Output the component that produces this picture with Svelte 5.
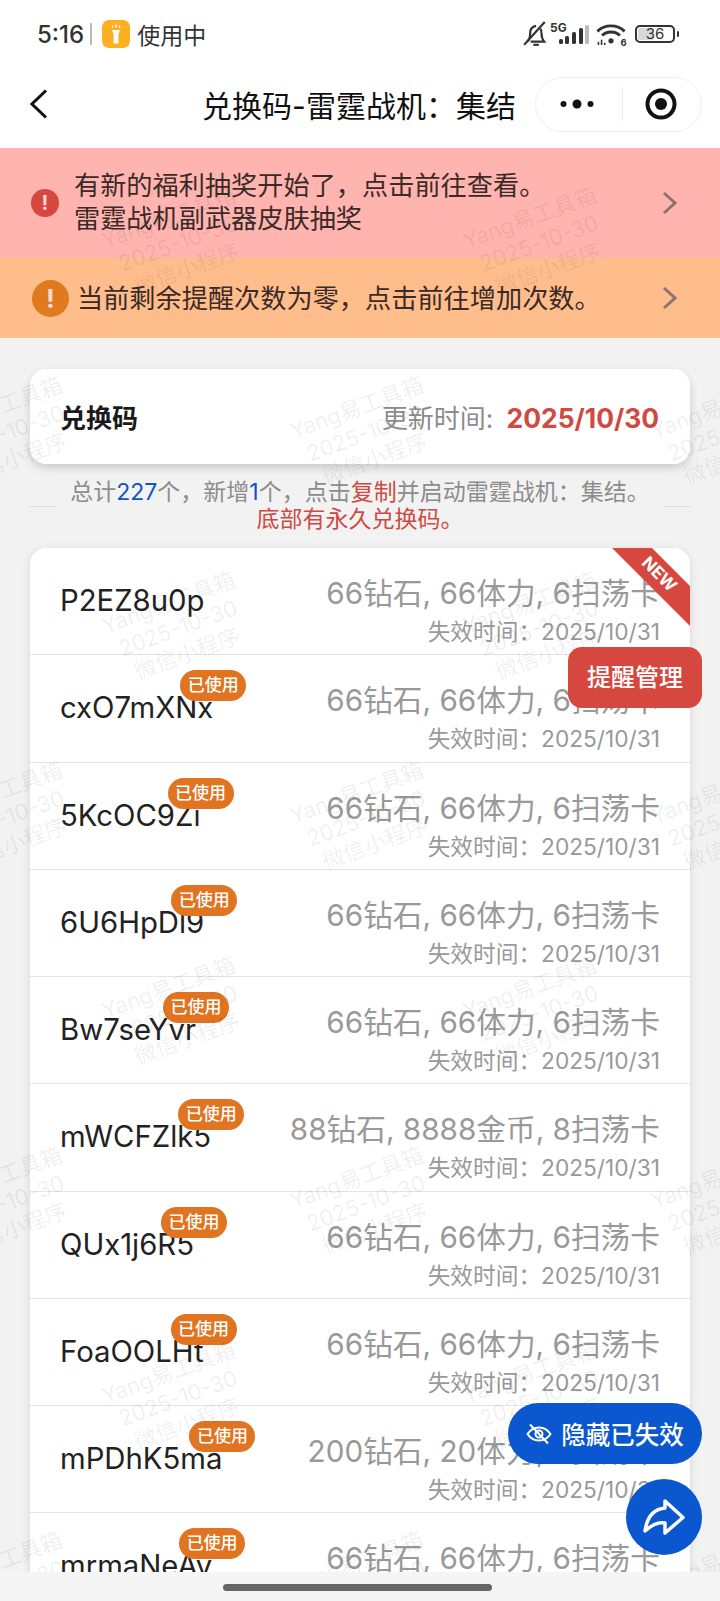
<script>
	const rows = [
		{ code: 'P2EZ8u0p', reward: '66钻石, 66体力, 6扫荡卡', used: false },
		{ code: 'cxO7mXNx', reward: '66钻石, 66体力, 6扫荡卡', used: true },
		{ code: '5KcOC9Zi', reward: '66钻石, 66体力, 6扫荡卡', used: true },
		{ code: '6U6HpDl9', reward: '66钻石, 66体力, 6扫荡卡', used: true },
		{ code: 'Bw7seYvr', reward: '66钻石, 66体力, 6扫荡卡', used: true },
		{ code: 'mWCFZlk5', reward: '88钻石, 8888金币, 8扫荡卡', used: true },
		{ code: 'QUx1j6R5', reward: '66钻石, 66体力, 6扫荡卡', used: true },
		{ code: 'FoaOOLHt', reward: '66钻石, 66体力, 6扫荡卡', used: true },
		{ code: 'mPDhK5ma', reward: '200钻石, 20体力, 8扫荡卡', used: true },
		{ code: 'mrmaNeAv', reward: '66钻石, 66体力, 6扫荡卡', used: true }
	];

	// watermark tiles, staggered: two columns repeating every 385px
	const marks = [];
	for (let i = 0; i < 4; i++) {
		for (const x of [178, 539]) marks.push({ x, y: 95 + i * 385 });
		for (const x of [5, 366, 727]) marks.push({ x, y: 285 + i * 385 });
	}
</script>

<div class="phone">
	<div class="status">
		<div class="status-left">
			<span class="clock">5:16</span>
			<span class="status-sep"></span>
			<span class="flash">
				<svg viewBox="0 0 28 28" width="28" height="28">
					<path d="M10 10h8l-1.600 4v9.500h-4.800V14z" fill="#fff" />
					<path d="M14 4.500v3M10 5.500l1 2M18 5.500l-1 2" stroke="#fff" stroke-width="1.300" fill="none" />
				</svg>
			</span>
			<span class="inuse">使用中</span>
		</div>
		<div class="status-right">
			<svg class="bell" viewBox="0 0 24 24" width="26" height="26">
				<path d="M5 19c2-2 2.500-4 2.500-7.500C7.500 7.500 10 5 13 4.500 M17 7c.8 1.200 1 2.800 1 4.500 0 3.500.8 5.500 2.500 7.500H8" fill="none" stroke="#333" stroke-width="2" />
				<path d="M2 22L21 1" stroke="#333" stroke-width="2" />
				<path d="M10.500 22h5" stroke="#333" stroke-width="2" />
			</svg>
			<span class="net">
				<span class="fiveg">5G</span>
				<svg viewBox="0 0 30 20" width="30" height="20">
					<rect x="0" y="14" width="4" height="5" rx="1.500" fill="#333" />
					<rect x="6" y="11" width="4" height="8" rx="1.500" fill="#333" />
					<rect x="13" y="7" width="4" height="12" rx="1.500" fill="#333" />
					<rect x="20" y="3" width="4" height="16" rx="1.500" fill="#333" />
					<rect x="26" y="0" width="4" height="19" rx="1.500" fill="#bbb" />
				</svg>
			</span>
			<svg class="wifi" viewBox="0 0 30 22" width="32" height="23">
				<path d="M2 8c7-7 19-7 26 0" fill="none" stroke="#333" stroke-width="2.800" />
				<path d="M6.500 12c4.500-4.500 12.500-4.500 17 0" fill="none" stroke="#333" stroke-width="2.800" />
				<circle cx="15" cy="17" r="2.500" fill="#333" />
				<path d="M3 21v-3M6 21v-5M9 21v-2" stroke="#333" stroke-width="1.500" />
				<text x="24" y="22" class="wifi-six">6</text>
			</svg>
			<span class="battery">
				<span class="battery-body">
					<span class="battery-fill"></span>
					<span class="battery-num">36</span>
				</span>
				<span class="battery-nub"></span>
			</span>
		</div>
	</div>

	<div class="nav">
		<svg class="back" viewBox="0 0 18 30" width="18" height="30">
			<path d="M16 1.500L2 15l14 13.500" fill="none" stroke="#111" stroke-width="3" />
		</svg>
		<div class="title">兑换码-雷霆战机：集结</div>
		<div class="capsule">
			<svg viewBox="0 0 34 12" width="34" height="12">
				<circle cx="3.500" cy="6" r="3" fill="#111" />
				<circle cx="17" cy="6" r="4.500" fill="#111" />
				<circle cx="30.500" cy="6" r="3" fill="#111" />
			</svg>
			<span class="capsule-sep"></span>
			<svg viewBox="0 0 32 32" width="32" height="32">
				<circle cx="16" cy="16" r="13.500" fill="none" stroke="#111" stroke-width="4" />
				<circle cx="16" cy="16" r="6" fill="#111" />
			</svg>
		</div>
	</div>

	<div class="body">
		<div class="banner red">
			<span class="dot dot-red">!</span>
			<div class="banner-text">有新的福利抽奖开始了，点击前往查看。<br />雷霆战机副武器皮肤抽奖</div>
			<svg class="chev" viewBox="0 0 16 24" width="16" height="24">
				<path d="M2 2l11 10L2 22" fill="none" stroke="#8c7370" stroke-width="3" />
			</svg>
		</div>
		<div class="banner orange">
			<span class="dot dot-orange">!</span>
			<div class="banner-text">当前剩余提醒次数为零，点击前往增加次数。</div>
			<svg class="chev" viewBox="0 0 16 24" width="16" height="24">
				<path d="M2 2l11 10L2 22" fill="none" stroke="#8c7370" stroke-width="3" />
			</svg>
		</div>

		<div class="main">
			<div class="head-card">
				<span class="head-title">兑换码</span>
				<span class="head-time">更新时间: <b>2025/10/30</b></span>
			</div>

			<div class="note">
				<span class="rule"></span>
				<div class="note-text">
					总计<i>227</i>个，新增<i>1</i>个，点击<em>复制</em>并启动雷霆战机：集结。<br />
					<em>底部有永久兑换码。</em>
				</div>
				<span class="rule"></span>
			</div>

			<div class="list">
				<div class="ribbon"></div>
				<span class="ribbon-text">NEW</span>
				{#each rows as row}
					<div class="row">
						<div class="code">
							{row.code}
							{#if row.used}<span class="badge">已使用</span>{/if}
						</div>
						<div class="info">
							<div class="reward">{row.reward}</div>
							<div class="expire">失效时间：2025/10/31</div>
						</div>
					</div>
				{/each}
			</div>
		</div>

		<div class="marks">
			{#each marks as m}
				<div class="mark" style="left:{m.x}px;top:{m.y}px">Yang易工具箱<br />2025-10-30<br />微信小程序</div>
			{/each}
		</div>

		<div class="fab-remind">提醒管理</div>
		<div class="fab-hide">
			<svg viewBox="0 0 26 24" width="26" height="24">
				<path d="M1.500 12C4.500 7.500 8.500 5.500 13 5.500s8.500 2 11.500 6.500c-3 4.500-7 6.500-11.500 6.500S4.500 16.500 1.500 12z" fill="none" stroke="#fff" stroke-width="2" />
				<circle cx="13" cy="12" r="3.500" fill="none" stroke="#fff" stroke-width="2" />
				<path d="M4 2.500L22 21.500" stroke="#fff" stroke-width="2" />
			</svg>
			隐藏已失效
		</div>
		<div class="fab-share">
			<svg viewBox="0 0 76 76" width="76" height="76">
				<path d="M39 22l18 16.500L39 54V44c-9-1-14 3-20 8 2-14 9-22 20-23z" fill="none" stroke="#fff" stroke-width="3.500" stroke-linejoin="round" />
			</svg>
		</div>
	</div>

	<div class="home"><span class="home-bar"></span></div>
</div>

<style>
	:global(body) {
		margin: 0;
		background: #f2f2f2;
	}

	.phone {
		width: 720px;
		height: 1601px;
		display: flex;
		flex-direction: column;
		overflow: hidden;
		background: #fff;
		font-family: Inter, "Noto Sans CJK SC", sans-serif;
		color: #222;
	}

	.status {
		height: 68px;
		padding: 0 41px 2px 37px;
		display: flex;
		justify-content: space-between;
		align-items: center;
		flex: none;
	}

	.status-left,
	.status-right {
		display: flex;
		align-items: center;
	}

	.clock {
		font-size: 24px;
		font-weight: 500;
		color: #333;
	}

	.status-sep {
		width: 2px;
		height: 22px;
		background: #bbb;
		margin: 0 10px 0 6px;
	}

	.flash {
		width: 28px;
		height: 28px;
		border-radius: 7px;
		background: #fdb022;
		display: flex;
	}

	.inuse {
		margin-left: 7px;
		font-size: 23px;
		color: #333;
	}

	.bell {
		margin-right: 1px;
	}

	.net {
		position: relative;
		width: 40px;
		height: 22px;
		display: flex;
		align-items: flex-end;
		justify-content: flex-end;
	}

	.net svg {
		width: 30px;
	}

	.fiveg {
		position: absolute;
		left: 1px;
		top: -3px;
		font-size: 12px;
		font-weight: 700;
		color: #333;
	}

	.wifi {
		margin-left: 6px;
	}

	.wifi-six {
		font-size: 9px;
		font-weight: 700;
		fill: #333;
	}

	.battery {
		margin-left: 8px;
		display: flex;
		align-items: center;
	}

	.battery-body {
		position: relative;
		width: 40px;
		height: 18px;
		box-sizing: border-box;
		border: 2px solid #333;
		border-radius: 5px;
		display: flex;
		align-items: center;
		justify-content: center;
	}

	.battery-fill {
		position: absolute;
		left: 1px;
		top: 1px;
		bottom: 1px;
		width: 16px;
		background: #d8d8d8;
		border-radius: 2px;
	}

	.battery-num {
		position: relative;
		font-size: 15px;
		line-height: 14px;
		color: #333;
	}

	.battery-nub {
		width: 2px;
		height: 6px;
		margin-left: 2px;
		background: #333;
		border-radius: 1px;
	}

	.nav {
		height: 78px;
		flex: none;
		display: grid;
		grid-template-columns: 1fr auto 1fr;
		align-items: center;
		padding: 0 18px 10px 30px;
		box-sizing: border-box;
	}

	.title {
		font-size: 30px;
		color: #111;
		white-space: nowrap;
		transform: translateX(-7px);
	}

	.capsule {
		justify-self: end;
		width: 167px;
		height: 55px;
		box-sizing: border-box;
		border: 1px solid #efefef;
		border-radius: 28px;
		display: flex;
		align-items: center;
		padding: 0 24px;
		justify-content: space-between;
	}

	.capsule-sep {
		width: 1px;
		height: 34px;
		background: #eee;
		margin-left: 6px;
	}

	.body {
		position: relative;
		flex: 1;
		overflow: hidden;
		background: #f2f2f2;
		display: flex;
		flex-direction: column;
	}

	.banner {
		flex: none;
		display: flex;
		align-items: center;
		color: #3a2a28;
		font-size: 26.200px;
		line-height: 33px;
	}

	.red {
		height: 110px;
		background: #ffb4af;
		padding: 0 42px 0 31px;
	}

	.orange {
		height: 80px;
		background: #ffbd8c;
		padding: 0 42px 0 32px;
	}

	.banner-text {
		flex: 1;
	}

	.red .banner-text {
		margin-left: 15px;
		margin-top: -2px;
	}

	.orange .banner-text {
		margin-left: 8px;
	}

	.dot {
		flex: none;
		border-radius: 50%;
		color: #ffd9d4;
		display: flex;
		align-items: center;
		justify-content: center;
		font-weight: 700;
	}

	.dot-red {
		width: 28px;
		height: 28px;
		background: #d6483f;
		font-size: 20px;
	}

	.dot-orange {
		width: 37px;
		height: 37px;
		background: #e07a1f;
		font-size: 26px;
	}

	.main {
		flex: 1;
		padding: 31px 30px 0;
		min-height: 0;
	}

	.head-card {
		height: 95px;
		box-sizing: border-box;
		padding: 0 31px 0 30px;
		background: #fff;
		border-radius: 16px;
		box-shadow: 0 4px 8px rgba(0, 0, 0, 0.16);
		display: flex;
		justify-content: space-between;
		align-items: center;
	}

	.head-title {
		font-size: 26px;
		font-weight: 700;
		color: #1a1a1a;
	}

	.head-time {
		font-size: 26px;
		color: #8c8c8c;
	}

	.head-time b {
		font-size: 26.400px;
		font-weight: 700;
		color: #cf4a42;
		margin-left: 6px;
	}

	.note {
		margin: 15px 0;
		display: flex;
		align-items: center;
	}

	.rule {
		flex: none;
		width: 27px;
		height: 1px;
		background: #dcdcdc;
	}

	.note-text {
		flex: 1;
		text-align: center;
		font-size: 23px;
		line-height: 27px;
		color: #8c8c8c;
		white-space: nowrap;
	}

	.note-text i {
		font-style: normal;
		color: #0d55c4;
	}

	.note-text em {
		font-style: normal;
		color: #cf4a42;
	}

	.list {
		position: relative;
		background: #fff;
		border-radius: 16px;
		box-shadow: 0 2px 8px rgba(0, 0, 0, 0.12);
	}

	.ribbon {
		position: absolute;
		top: 0;
		right: 0;
		width: 78px;
		height: 78px;
		background: #d6483f;
		clip-path: polygon(0 0, 40px 0, 100% 38px, 100% 100%);
	}

	.ribbon-text {
		position: absolute;
		top: 16px;
		right: 10px;
		font-size: 17px;
		line-height: 20px;
		font-weight: 700;
		color: #fff;
		transform: rotate(45deg);
	}

	.row {
		height: 107.250px;
		box-sizing: border-box;
		padding: 0 30px 0 30px;
		border-bottom: 1px solid #e4e4e4;
		display: flex;
		justify-content: space-between;
	}

	.code {
		position: relative;
		align-self: flex-start;
		margin-top: 33px;
		font-size: 29.300px;
		line-height: 40px;
		color: #222;
		white-space: nowrap;
	}

	.badge {
		position: absolute;
		top: -18px;
		right: -33px;
		width: 66px;
		height: 31px;
		border-radius: 16px;
		background: #e07420;
		color: #fff;
		font-size: 17px;
		font-weight: 500;
		line-height: 31px;
		text-align: center;
	}

	.info {
		padding-top: 26px;
		text-align: right;
		color: #999;
	}

	.reward {
		font-size: 29.700px;
		line-height: 38px;
		white-space: nowrap;
	}

	.expire {
		margin-top: 5px;
		font-size: 22.700px;
		line-height: 30px;
		white-space: nowrap;
	}

	.marks {
		position: absolute;
		inset: 0;
		pointer-events: none;
	}

	.mark {
		position: absolute;
		width: 200px;
		margin-left: -100px;
		margin-top: -40px;
		text-align: center;
		font-size: 22px;
		line-height: 27px;
		color: rgba(0, 0, 0, 0.07);
		transform: rotate(-20deg);
	}

	.fab-remind {
		position: absolute;
		left: 568px;
		top: 499px;
		width: 134px;
		height: 61px;
		border-radius: 14px;
		background: #d6483f;
		color: #fff;
		font-size: 24px;
		font-weight: 500;
		line-height: 61px;
		text-align: center;
	}

	.fab-hide {
		position: absolute;
		left: 508px;
		top: 1255px;
		width: 194px;
		height: 61px;
		border-radius: 31px;
		background: #0a57cf;
		color: #fff;
		font-size: 24.500px;
		font-weight: 500;
		display: flex;
		align-items: center;
		justify-content: center;
		gap: 9px;
	}

	.fab-share {
		position: absolute;
		left: 626px;
		top: 1331px;
		width: 76px;
		height: 76px;
		border-radius: 50%;
		background: #0a57cf;
	}

	.home {
		flex: none;
		height: 29px;
		background: #f5f5f5;
		display: flex;
		justify-content: center;
		position: relative;
	}

	.home-bar {
		width: 269px;
		height: 7px;
		margin: 12px 5px 0 0;
		border-radius: 4px;
		background: #666;
	}
</style>
